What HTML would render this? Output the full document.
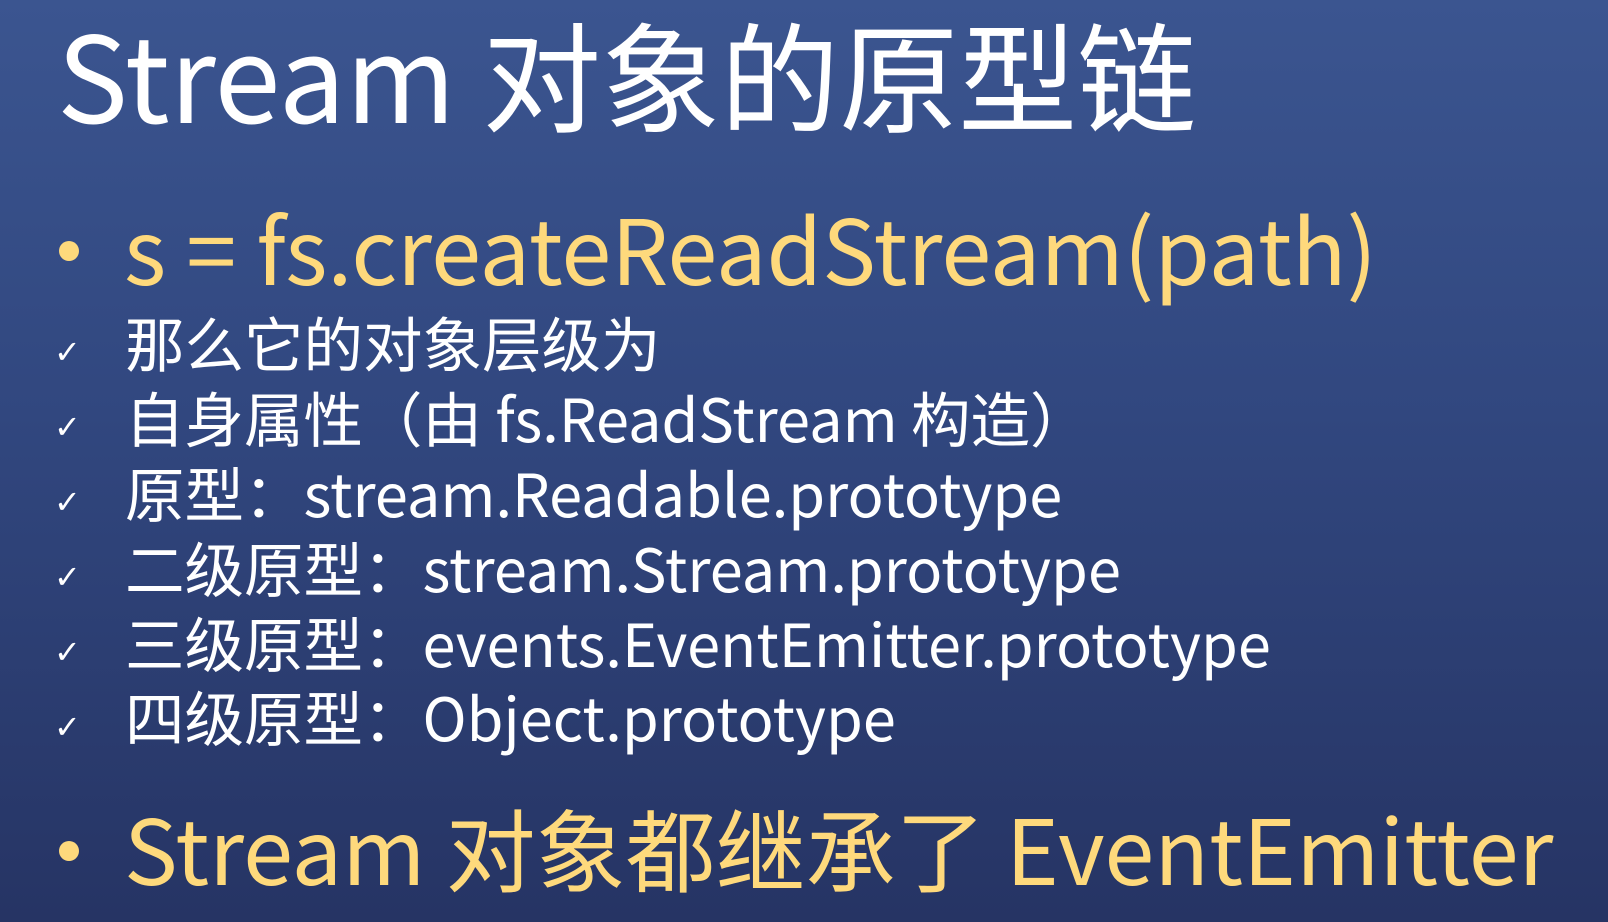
<!DOCTYPE html>
<html><head><meta charset="utf-8"><style>
html,body{margin:0;padding:0}
body{width:1608px;height:922px;overflow:hidden;position:relative;
background:linear-gradient(180deg,#3b5590 0%,#31477f 45%,#263464 100%);
font-family:"Noto Sans CJK SC","Liberation Sans",sans-serif;}
.t{position:absolute;line-height:1;white-space:nowrap}
.title{left:57px;top:13px;font-size:119px;color:#fff}
.y{color:#fed97c;font-size:90px}
.s{color:#fff;font-size:59.5px;left:125px}
.dot{position:absolute;width:20px;height:20px;border-radius:50%;background:#fed97c}
.ck{position:absolute;left:54px;color:#fff;font-size:32px;line-height:1;font-family:"DejaVu Sans",sans-serif}
</style></head><body>
<div class="t title">Stream 对象的原型链</div>
<div class="dot" style="left:59px;top:241px"></div>
<div class="t y" style="left:124px;top:201px">s = fs.createReadStream(path)</div>
<div class="ck" style="top:336px">✓</div>
<div class="t s" style="top:313px">那么它的对象层级为</div>
<div class="ck" style="top:411px">✓</div>
<div class="t s" style="top:388px">自身属性（由 fs.ReadStream 构造）</div>
<div class="ck" style="top:486px">✓</div>
<div class="t s" style="top:463px">原型：stream.Readable.prototype</div>
<div class="ck" style="top:561px">✓</div>
<div class="t s" style="top:538px">二级原型：stream.Stream.prototype</div>
<div class="ck" style="top:636px">✓</div>
<div class="t s" style="top:613px">三级原型：events.EventEmitter.prototype</div>
<div class="ck" style="top:711px">✓</div>
<div class="t s" style="top:687px">四级原型：Object.prototype</div>
<div class="dot" style="left:59px;top:841px"></div>
<div class="t y" style="left:124px;top:801px">Stream 对象都继承了 EventEmitter</div>
</body></html>
